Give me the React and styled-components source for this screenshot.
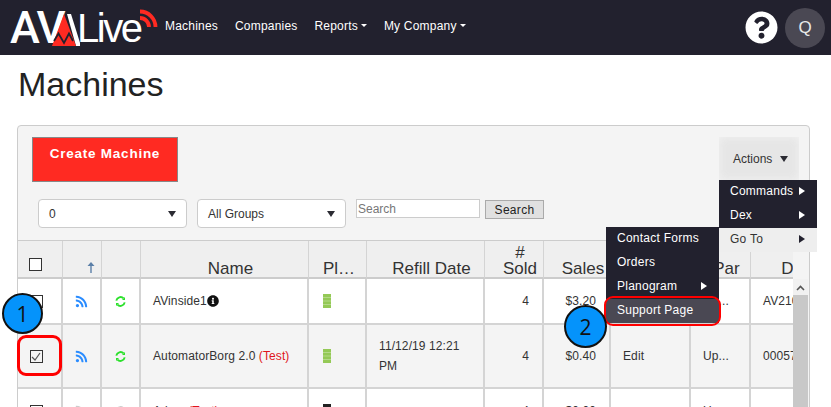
import React from 'react';
import styled, { createGlobalStyle } from 'styled-components';
import { FaRss, FaInfoCircle, FaQuestionCircle } from 'react-icons/fa';

const GlobalStyle = createGlobalStyle`
  html, body {
    margin: 0;
    height: 407px;
    overflow: hidden;
    background: #fff;
    font-family: "Liberation Sans", Arial, sans-serif;
    color: #333;
  }
`;

const Nav = styled.nav`
  height: 55px;
  background: #22212e;
  display: flex;
  align-items: center;
  padding: 0 6px 0 10px;
`;

const Logo = styled.div`
  display: flex;
  align-items: flex-end;
  width: 155px;
  height: 42px;
  color: #fff;
  position: relative;
`;

const LogoAv = styled.span`
  width: 42px;
  flex: none;
  font: 500 45px/42px Roboto, sans-serif;
  letter-spacing: -1.5px;
`;

const LogoLive = styled.span`
  margin-left: -3px;
  font: 400 40px/42px "Liberation Sans", Arial, sans-serif;
  letter-spacing: -2.5px;
`;

const LogoPeak = styled.svg`
  width: 28px;
  height: 32px;
  margin: 0 0 3px 0;
  flex: none;
`;

const LogoWaves = styled.svg`
  position: absolute;
  left: 130px;
  top: 2px;
  width: 18px;
  height: 18px;
`;

const NavLink = styled.a`
  color: #fff;
  font-size: 12px;
  letter-spacing: 0.2px;
  margin-right: 17px;
  padding-bottom: 4px;
  display: flex;
  align-items: center;
  white-space: nowrap;
`;

const NavCaret = styled.i`
  width: 0;
  height: 0;
  margin-left: 3px;
  border-left: 3px solid transparent;
  border-right: 3px solid transparent;
  border-top: 3px solid #fff;
`;

const NavRight = styled.div`
  margin-left: auto;
  display: flex;
  align-items: center;
  gap: 7px;
  color: #fff;
`;

const Avatar = styled.div`
  width: 40px;
  height: 40px;
  border-radius: 50%;
  background: #4a4853;
  color: #e8e8e8;
  font-size: 17px;
  display: flex;
  align-items: center;
  justify-content: center;
`;

const Title = styled.h1`
  margin: 10px 0 0 18px;
  height: 60px;
  font-size: 34px;
  line-height: 38px;
  font-weight: 400;
  color: #222;
`;

const Panel = styled.section`
  position: relative;
  width: 791px;
  height: 300px;
  margin-left: 17px;
  background: #f4f4f4;
  border: 1px solid #ccc;
  border-radius: 4px;
`;

const TopRow = styled.div`
  display: flex;
  justify-content: space-between;
  align-items: flex-start;
  padding: 11px 10px 0 14px;
  height: 50px;
`;

const CreateButton = styled.button`
  width: 146px;
  height: 45px;
  padding: 0 0 13px;
  background: #ff2a22;
  border: 1px solid #888;
  color: #fff;
  font: 700 13.5px "Liberation Sans", Arial, sans-serif;
  letter-spacing: 0.75px;
`;

const ActionsButton = styled.div`
  box-sizing: border-box;
  width: 80px;
  height: 43px;
  padding-left: 14px;
  background: #e6e6e6;
  box-shadow: inset 0 0 8px #f2f2f2;
  color: #333;
  font-size: 12px;
  display: flex;
  align-items: center;
  gap: 8px;
`;

const Triangle = styled.i`
  width: 0;
  height: 0;
  border-left: 4px solid transparent;
  border-right: 4px solid transparent;
  border-top: 6px solid #2b2b33;
`;

const FilterRow = styled.div`
  display: flex;
  align-items: flex-start;
  height: 41px;
  padding: 12px 0 0 20px;
`;

const Select = styled.div`
  box-sizing: border-box;
  width: 149px;
  height: 29px;
  margin-right: 10px;
  padding: 0 10px;
  background: #fff;
  border: 1px solid #ccc;
  border-radius: 4px;
  font-size: 12px;
  display: flex;
  align-items: center;
  justify-content: space-between;
`;

const SearchInput = styled.input`
  box-sizing: border-box;
  width: 124px;
  height: 19px;
  padding: 0 1px;
  background: #fff;
  border: 1px solid #ccc;
  font: 12px "Liberation Sans", Arial, sans-serif;
  &::placeholder { color: #777; }
`;

const SearchButton = styled.button`
  box-sizing: border-box;
  width: 59px;
  height: 19px;
  margin: 1px 0 0 5px;
  padding: 0;
  background: #e0e0e0;
  border: 1px solid #aaa;
  color: #222;
  font: 12px "Liberation Sans", Arial, sans-serif;
  letter-spacing: 0.3px;
`;

const TableArea = styled.div`
  display: flex;
  height: 181px;
  overflow: hidden;
  border-top: 1px solid #ccc;
`;

const TableClip = styled.div`
  width: 775px;
  overflow: hidden;
  flex: none;
`;

const Table = styled.table`
  width: 795px;
  table-layout: fixed;
  border-collapse: separate;
  border-spacing: 0;
`;

const Th = styled.th`
  box-sizing: border-box;
  height: 38px;
  padding: 0 0 0 12px;
  background: #efefef;
  border-right: 1px solid #d4d4d4;
  border-bottom: 2px solid #ccc;
  color: #333;
  font-size: 17px;
  line-height: 16px;
  font-weight: 400;
  text-align: center;
  vertical-align: bottom;
  overflow: hidden;
`;

const CheckTh = styled(Th)`
  padding: 0 9px 6px 0;
  line-height: 0;
`;

const SortTh = styled(Th)`
  padding: 0 0 4px 18px;
  line-height: 0;
`;

const ClippedTh = styled(Th)`
  padding-left: 14px;
  text-align: left;
  white-space: nowrap;
`;

const Td = styled.td`
  box-sizing: border-box;
  height: ${p => p.$h}px;
  padding: 0 13px 0 12px;
  background: ${p => (p.$alt ? '#f4f4f4' : '#fff')};
  border-right: 2px solid #d4d4d4;
  border-bottom: 2px solid #d4d4d4;
  font-size: 12px;
  line-height: 20px;
  letter-spacing: 0.1px;
  color: #333;
  text-align: ${p => (p.$right ? 'right' : 'left')};
  white-space: ${p => (p.$wrap ? 'normal' : 'nowrap')};
  overflow: hidden;
`;

const IconCell = styled(Td)`
  padding: 0;
  text-align: center;
  line-height: 0;
`;

const CheckCell = styled(IconCell)`
  padding-right: 7px;
`;

const PlanoCell = styled(Td)`
  padding-left: 14px;
`;

const Check = styled.span`
  box-sizing: border-box;
  display: inline-flex;
  align-items: center;
  justify-content: center;
  width: 13px;
  height: 13px;
  border: 1px solid #333;
  background: ${p => (p.$alt ? '#f4f4f4' : '#fff')};
`;

const TestTag = styled.span`
  color: #e0141c;
`;

const InfoIcon = styled(FaInfoCircle)`
  color: #111;
  font-size: 12px;
  vertical-align: -2px;
`;

const PlanoIcon = styled.svg`
  display: block;
  width: 8px;
  height: 14px;
`;

const Scrollbar = styled.div`
  width: 15px;
  flex: none;
  margin-top: 38px;
  background: #f1f1f1;
  display: flex;
  flex-direction: column;
  align-items: center;
`;

const ScrollArrow = styled.svg`
  width: 9px;
  height: 6px;
  margin: 6px 0 4px;
  flex: none;
`;

const ScrollThumb = styled.div`
  width: 100%;
  flex: 1;
  background: #c8c8c8;
`;

const Menu = styled.div`
  position: absolute;
  left: ${p => p.$left}px;
  top: ${p => p.$top}px;
  width: ${p => p.$width}px;
  z-index: 2;
  background: #22212e;
`;

const MenuItem = styled.div`
  box-sizing: border-box;
  height: 24px;
  padding: 0 12px 2px 11px;
  display: flex;
  align-items: center;
  justify-content: space-between;
  font-size: 12px;
  letter-spacing: 0.25px;
  color: ${p => (p.$light ? '#333' : '#fff')};
  background: ${p => (p.$light ? '#eee' : p.$hover ? '#4a4853' : 'transparent')};
`;

const MenuArrow = styled.i`
  width: 0;
  height: 0;
  border-top: 4px solid transparent;
  border-bottom: 4px solid transparent;
  border-left: 6px solid ${p => (p.$dark ? '#22212e' : '#fff')};
`;

const Highlight = styled.div`
  position: absolute;
  left: ${p => p.$left}px;
  top: ${p => p.$top}px;
  width: ${p => p.$width}px;
  height: ${p => p.$height}px;
  z-index: 3;
  box-sizing: border-box;
  border: ${p => p.$line}px solid #f00;
  border-radius: 9px;
`;

const Callout = styled.div`
  position: absolute;
  left: ${p => p.$left}px;
  top: ${p => p.$top}px;
  z-index: 4;
  box-sizing: border-box;
  width: ${p => p.$size}px;
  height: ${p => p.$size}px;
  border: 2.5px solid #111;
  border-radius: 50%;
  background: #0593fb;
  color: #111;
  font: 21px "Open Sans", sans-serif;
  display: flex;
  align-items: center;
  justify-content: center;
`;

const columns = [45, 39, 39, 168, 58, 118, 59, 67, 80, 60, 62];

const rows = [
  { h: 46, name: 'AVinside1', info: true, sold: '4', sales: '$3.20', par: 'Up...', device: 'AV210183' },
  { h: 64, alt: true, checked: true, name: 'AutomatorBorg 2.0 ', test: '(Test)', date: '11/12/19 12:21 PM', sold: '4', sales: '$0.40', action: 'Edit', par: 'Up...', device: '00057A1' },
  { h: 46, muted: true, name: 'Adam ', test: '(Test)', sold: '4', sales: '$0.00', par: 'Up...' },
];

function PlanoGlyph({ fill }) {
  return (
    <PlanoIcon viewBox="0 0 8 14">
      <rect width="8" height="14" fill={fill} />
      <path d="M0 3.500h8M0 7h8M0 10.500h8" stroke="#fff" strokeOpacity=".3" />
    </PlanoIcon>
  );
}

function SyncGlyph({ color }) {
  return (
    <svg width="11" height="11" viewBox="0 0 11 11" fill="none" stroke={color} strokeWidth="1.900">
      <path d="M8.600 2.400A4.300 4.300 0 0 0 1.300 4.600" />
      <path d="M2.400 8.600A4.300 4.300 0 0 0 9.700 6.400" />
      <path d="M10 0.900v3H7z" fill={color} stroke="none" />
      <path d="M1 10.100v-3h3z" fill={color} stroke="none" />
    </svg>
  );
}

function Row({ row }) {
  const { h, alt, muted } = row;
  return (
    <tr>
      <CheckCell $h={h} $alt={alt}>
        <Check $alt={alt}>
          {row.checked && (
            <svg width="10" height="9" viewBox="0 0 10 9">
              <path d="M1 5l3 3 5-7" fill="none" stroke="#555" strokeWidth="1.200" />
            </svg>
          )}
        </Check>
      </CheckCell>
      <IconCell $h={h} $alt={alt}>
        <FaRss size={13} color={muted ? '#ccc' : '#2a8cff'} />
      </IconCell>
      <IconCell $h={h} $alt={alt}>
        <SyncGlyph color={muted ? '#ccc' : '#2be02b'} />
      </IconCell>
      <Td $h={h} $alt={alt}>
        {row.name}
        {row.test && <TestTag>{row.test}</TestTag>}
        {row.info && <InfoIcon />}
      </Td>
      <PlanoCell $h={h} $alt={alt}>
        <PlanoGlyph fill={muted ? '#222' : '#94c956'} />
      </PlanoCell>
      <Td $h={h} $alt={alt} $wrap>{row.date}</Td>
      <Td $h={h} $alt={alt} $right>{row.sold}</Td>
      <Td $h={h} $alt={alt} $right>{row.sales}</Td>
      <Td $h={h} $alt={alt}>{row.action}</Td>
      <Td $h={h} $alt={alt}>{row.par}</Td>
      <Td $h={h} $alt={alt}>{row.device}</Td>
    </tr>
  );
}

export default function App() {
  return (
    <>
      <GlobalStyle />
      <Nav>
        <Logo>
          <LogoAv>AV</LogoAv>
          <LogoPeak viewBox="0 0 28 32">
            <path d="M15 0H19L29 32H24Z" fill="#fff" />
            <path d="M12 0L24 32H0Z" fill="#ff2a22" />
            <path d="M2 27L6.500 19.500L12 29L17 19.500L21 27" fill="none" stroke="#22212e" strokeWidth="1.800" />
          </LogoPeak>
          <LogoLive>Live</LogoLive>
          <LogoWaves viewBox="0 0 18 18">
            <path d="M0 9a9 9 0 0 1 9 9M0 2.500a15.500 15.500 0 0 1 15.500 15.500" fill="none" stroke="#ff2a22" strokeWidth="3.800" />
          </LogoWaves>
        </Logo>
        <NavLink>Machines</NavLink>
        <NavLink>Companies</NavLink>
        <NavLink>Reports<NavCaret /></NavLink>
        <NavLink>My Company<NavCaret /></NavLink>
        <NavRight>
          <FaQuestionCircle size={33} />
          <Avatar>Q</Avatar>
        </NavRight>
      </Nav>

      <Title>Machines</Title>

      <Panel>
        <TopRow>
          <CreateButton>Create Machine</CreateButton>
          <ActionsButton>Actions <Triangle /></ActionsButton>
        </TopRow>

        <FilterRow>
          <Select>0 <Triangle /></Select>
          <Select>All Groups <Triangle /></Select>
          <SearchInput placeholder="Search" />
          <SearchButton>Search</SearchButton>
        </FilterRow>

        <TableArea>
          <TableClip>
            <Table>
              <colgroup>
                {columns.map((w, i) => <col key={i} width={w} />)}
              </colgroup>
              <thead>
                <tr>
                  <CheckTh><Check /></CheckTh>
                  <SortTh>
                    <svg width="8" height="11" viewBox="0 0 8 11">
                      <path d="M4 11V3" stroke="#5b7fa8" strokeWidth="1.400" />
                      <path d="M4 0L7.500 4H0.500z" fill="#5b7fa8" />
                    </svg>
                  </SortTh>
                  <Th />
                  <Th>Name</Th>
                  <ClippedTh>Pl…</ClippedTh>
                  <Th>Refill Date</Th>
                  <Th># Sold</Th>
                  <Th>Sales</Th>
                  <Th />
                  <Th>Par</Th>
                  <Th>D</Th>
                </tr>
              </thead>
              <tbody>
                {rows.map((row, i) => <Row key={i} row={row} />)}
              </tbody>
            </Table>
          </TableClip>
          <Scrollbar>
            <ScrollArrow viewBox="0 0 9 6">
              <path d="M1 5l3.500-3.500L8 5" fill="none" stroke="#555" strokeWidth="1.600" />
            </ScrollArrow>
            <ScrollThumb />
          </Scrollbar>
        </TableArea>

        <Menu $left={701} $top={54} $width={98}>
          <MenuItem>Commands <MenuArrow /></MenuItem>
          <MenuItem>Dex <MenuArrow /></MenuItem>
          <MenuItem $light>Go To <MenuArrow $dark /></MenuItem>
        </Menu>

        <Menu $left={588} $top={101} $width={113}>
          <MenuItem>Contact Forms</MenuItem>
          <MenuItem>Orders</MenuItem>
          <MenuItem>Planogram <MenuArrow /></MenuItem>
          <MenuItem $hover>Support Page</MenuItem>
        </Menu>

        <Highlight $left={586} $top={170} $width={117} $height={30} $line={2} />
        <Highlight $left={-1} $top={209} $width={45} $height={41} $line={3} />
        <Callout $size={41} $left={-16} $top={167}>1</Callout>
        <Callout $size={43} $left={546} $top={179}>2</Callout>
      </Panel>
    </>
  );
}
